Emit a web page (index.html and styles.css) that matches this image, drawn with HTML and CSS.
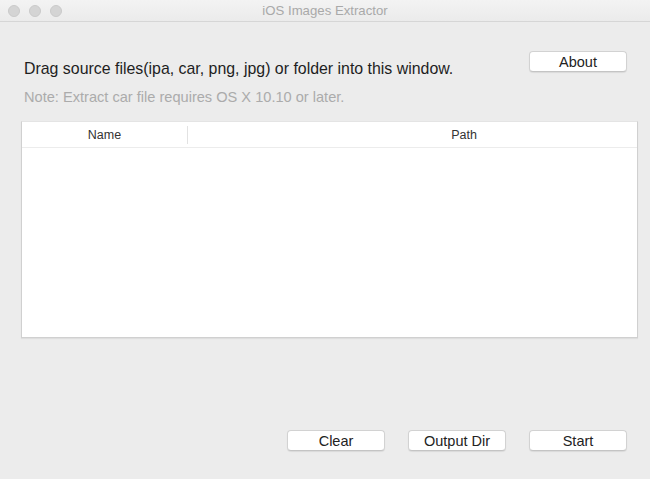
FILE: index.html
```
<!DOCTYPE html>
<html lang="en">
<head>
    <meta charset="UTF-8">
    <meta name="viewport" content="width=device-width, initial-scale=1.0">
    <title>iOS Images Extractor</title>
    <link rel="stylesheet" href="styles.css">
</head>
<body>
    <div class="window">
        <div class="titlebar">
            <div class="lights">
                <span class="light"></span>
                <span class="light"></span>
                <span class="light"></span>
            </div>
            <div class="title">iOS Images Extractor</div>
        </div>
        <div class="content">
            <div class="top">
                <div class="texts">
                    <p class="tip">Drag source files(ipa, car, png, jpg) or folder into this window.</p>
                    <p class="note">Note: Extract car file requires OS X 10.10 or later.</p>
                </div>
                <button class="btn">About</button>
            </div>
            <div class="table">
                <div class="thead">
                    <div class="col name">Name</div>
                    <div class="col path">Path</div>
                </div>
                <div class="tbody"></div>
            </div>
            <div class="bottom">
                <button class="btn">Clear</button>
                <button class="btn">Output Dir</button>
                <button class="btn">Start</button>
            </div>
        </div>
    </div>
</body>
</html>
```

FILE: styles.css
```
* {
    margin: 0;
    padding: 0;
    box-sizing: border-box;
}
body {
    font-family: "Liberation Sans", Arial, sans-serif;
    background: #ececec;
}
.window {
    width: 650px;
    height: 479px;
    display: flex;
    flex-direction: column;
    background: #ececec;
}
.titlebar {
    height: 22px;
    position: relative;
    background: linear-gradient(#f3f3f3, #ebebeb);
    border-bottom: 1px solid #d6d6d6;
    display: flex;
    align-items: center;
    justify-content: center;
}
.lights {
    position: absolute;
    left: 8px;
    top: 5px;
    display: flex;
    gap: 9px;
}
.light {
    width: 12px;
    height: 12px;
    border-radius: 50%;
    background: #d4d4d4;
    border: 1px solid #cacaca;
}
.title {
    font-size: 13.2px;
    color: #a9a9a9;
}
.content {
    flex: 1;
    display: flex;
    flex-direction: column;
    padding: 29px 12px 28px 21px;
}
.top {
    display: flex;
    justify-content: space-between;
    align-items: flex-start;
    padding-right: 11px;
}
.texts {
    padding-left: 3px;
    padding-top: 9px;
}
.tip {
    font-size: 15.9px;
    line-height: 18px;
    color: #1e1e1e;
}
.note {
    margin-top: 11px;
    font-size: 14.6px;
    line-height: 17px;
    color: #ababab;
}
.btn {
    width: 98px;
    height: 21px;
    background: #fff;
    border: 1px solid #d2d2d2;
    border-bottom-color: #c4c4c4;
    border-radius: 4px;
    box-shadow: 0 1px 1px rgba(0, 0, 0, 0.08);
    font-family: "Liberation Sans", Arial, sans-serif;
    font-size: 14.5px;
    color: #222;
}
.table {
    margin-top: 15px;
    height: 217px;
    background: #fff;
    border: 1px solid #d0d0d0;
    border-top-color: #e4e4e4;
    box-shadow: 0 1px 1px rgba(0, 0, 0, 0.06);
    display: flex;
    flex-direction: column;
}
.thead {
    height: 26px;
    display: flex;
    align-items: center;
    border-bottom: 1px solid #ececec;
}
.col {
    font-size: 12.5px;
    color: #333;
    text-align: center;
}
.name {
    width: 166px;
    border-right: 1px solid #e2e2e2;
    line-height: 18px;
}
.path {
    flex: 1;
    padding-left: 103px;
}
.tbody {
    flex: 1;
}
.bottom {
    margin-top: auto;
    display: flex;
    justify-content: flex-end;
    gap: 23px;
    padding-right: 11px;
}
```
